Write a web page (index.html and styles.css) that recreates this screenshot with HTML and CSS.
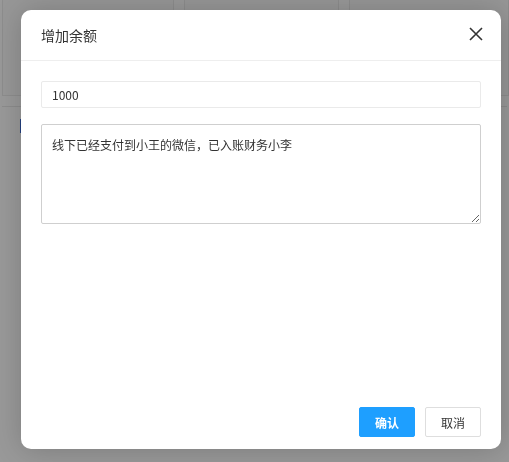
FILE: index.html
```html
<!DOCTYPE html>
<html lang="zh-CN">
<head>
<meta charset="utf-8">
<link rel="stylesheet" href="styles.css">
</head>
<body>
<div class="page">
  <div class="cards">
    <div class="card"></div>
    <div class="card"></div>
    <div class="card"></div>
  </div>
  <div class="strip"><span class="marker"></span></div>
</div>
<div class="overlay"></div>
<div class="modal">
  <div class="modal-head">
    <span class="title">增加余额</span>
    <svg class="close" width="14" height="14" viewBox="0 0 14 14"><path d="M1 1L13 13M13 1L1 13" stroke="#333" stroke-width="1.6" fill="none"/></svg>
  </div>
  <div class="modal-body">
    <input class="field" type="text" value="1000">
    <textarea class="area">线下已经支付到小王的微信，已入账财务小李</textarea>
  </div>
  <div class="modal-foot">
    <button class="btn primary">确认</button>
    <button class="btn">取消</button>
  </div>
</div>
</body>
</html>
```
FILE: styles.css
```css
html, body {
  margin: 0;
  padding: 0;
  width: 509px;
  height: 462px;
  overflow: hidden;
  font-family: "Noto Sans CJK SC", "Noto Sans", sans-serif;
  background: #fff;
}
.page {
  height: 462px;
  padding: 0 2px;
  box-sizing: border-box;
}
.cards {
  display: grid;
  grid-template-columns: 172px 155px 160px;
  gap: 10px;
  height: 96px;
}
.card {
  border: 1px solid #ececec;
  border-top: none;
  background: #fcfcfc;
}
.strip {
  margin-top: 10px;
  border-top: 1px solid #eaeaea;
  height: 360px;
  position: relative;
}
.marker {
  position: absolute;
  left: 18px;
  top: 12px;
  width: 3px;
  height: 14px;
  background: #3c6bd6;
}
.overlay {
  position: fixed;
  inset: 0;
  background: rgba(0, 0, 0, 0.4);
}
.modal {
  position: absolute;
  left: 21px;
  top: 10px;
  width: 480px;
  height: 439px;
  background: #fff;
  border-radius: 10px;
  display: flex;
  flex-direction: column;
  box-shadow: 1px 1px 30px rgba(0, 0, 0, 0.2);
}
.modal-head {
  height: 50px;
  border-bottom: 1px solid #eee;
  display: flex;
  align-items: center;
  justify-content: space-between;
  padding: 0 18px 0 20px;
}
.title {
  font-size: 14px;
  color: #333;
}
.close {
  display: block;
  margin-top: -2px;
}
.modal-body {
  flex: 1;
  padding: 20px 20px 0;
  display: flex;
  flex-direction: column;
  gap: 16px;
}
.field {
  box-sizing: border-box;
  height: 27px;
  border: 1px solid #eaeaea;
  border-radius: 2px;
  padding: 0 10px 1px;
  font-family: inherit;
  font-size: 12px;
  color: #333;
  outline: none;
  margin: 0;
}
.area {
  box-sizing: border-box;
  height: 100px;
  border: 1px solid #cfcfcf;
  border-radius: 2px;
  padding: 10px 10px;
  font-family: inherit;
  font-size: 12px;
  line-height: 20px;
  color: #333;
  outline: none;
  margin: 0;
}
.modal-foot {
  display: flex;
  justify-content: flex-end;
  gap: 10px;
  padding: 0 20px 12px;
}
.btn {
  width: 56px;
  height: 30px;
  border: 1px solid #dedede;
  background: #fff;
  color: #333;
  border-radius: 2px;
  font-family: inherit;
  font-size: 12px;
  padding: 0;
}
.btn.primary {
  background: #1e9fff;
  border-color: #1e9fff;
  color: #fff;
  font-weight: bold;
}
```
